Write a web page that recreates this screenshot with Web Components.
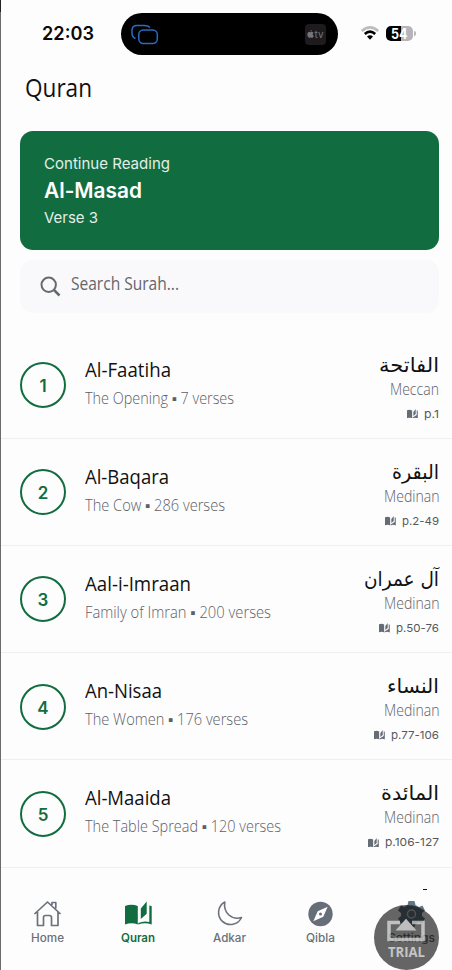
<!DOCTYPE html>
<html lang="en"><head><meta charset="utf-8"><title>Quran</title>
<style>
html,body{margin:0;padding:0}
body{background:#fdfdfd;width:452px;height:970px;overflow:hidden;font-family:"Open Sans",sans-serif}
</style></head><body>
<quran-app></quran-app>
<script>
// Text line that is condensed or expanded to a given width.
class FitText extends HTMLElement{
  connectedCallback(){
    const r=this.attachShadow({mode:'open'});
    const w=+this.getAttribute('w');
    r.innerHTML=`<style>:host{display:block;white-space:nowrap;width:${w}px}span{display:inline-block;transform-origin:0 50%}</style><span></span>`;
    const s=r.querySelector('span');
    s.textContent=this.getAttribute('text');
    const m=s.getBoundingClientRect().width;
    if(m)s.style.transform=`scaleX(${w/m})`;
  }
}
const BOOK='<path d="M0 3.2Q6.500 .8 12.600 3.400V22.300Q6.500 19.600 0 22.300ZM15.600 17.200V7.500L21.400 0V12ZM13.800 23V20.700L23.900 14.500V3.200L26.500 4.400V23Q20 19.800 13.800 23Z"/>';
const BOOK2='<path d="M0 4.500Q6.500 2 12.800 4.500V23Q6.500 20.500 0 23ZM15.800 17.500V7L21.700 0V12.200ZM24.300 4Q25.500 4 26.700 4.700V23Q20 20.300 13.300 23V21.500Q19 19 24.300 20.500Z"/>';
class StatusBar extends HTMLElement{
  connectedCallback(){
    this.attachShadow({mode:'open'}).innerHTML=`<style>
    :host{display:grid;grid-template-columns:121px 217px 1fr;height:67px;box-sizing:border-box;padding-top:13px;font-family:Inter,sans-serif}
    .time{padding-left:42px;font-size:18.500px;font-weight:600;line-height:41px;color:#0a0a0a}
    .island{height:42px;border-radius:21px;background:#000;display:flex;align-items:center;justify-content:space-between;padding:0 12px 0 10px}
    .island>svg{margin-top:2px}
    .tv{width:21px;height:21px;border-radius:4px;background:#1d1b1e;color:#77757a;display:flex;align-items:center;justify-content:center;font-size:10px}
    .right{display:flex;align-items:flex-start;padding:12px 0 0 22px}
    .bat{display:flex;justify-content:center;margin:1px 0 0 6px;width:27px;height:15px;border-radius:5px;background:linear-gradient(90deg,#000 15px,#b6b4b8 15px);color:#fff;font-weight:700;font-size:14px;line-height:15px}
    .nub{width:2px;height:5px;margin:6px 0 0 1px;border-radius:0 2px 2px 0;background:#b6b4b8}
    </style>
    <div class="time"><fit-text w="52" text="22:03"></fit-text></div>
    <div class="island"><svg width="28" height="22" viewBox="0 0 28 22" fill="none" stroke="#2a6cc0" stroke-width="1.500"><path d="M4.500 14.500C1.800 13.500 1 12 1 9V6.500C1 3 3 1.500 6 1.500H13C16.500 1.500 18 2 18.800 3.800"/><rect x="7.800" y="6" width="18.500" height="13.500" rx="4.500"/></svg>
    <div class="tv"><svg width="7" height="8" viewBox="0 0 14 16" fill="currentColor"><path d="M9.800 0C10 2 8 3.500 7 3.500 7 1.500 8 .5 9.800 0ZM7 4.500C8 4.500 9 3.500 10.500 3.800 12 4 12.800 4.800 13.200 5.500 10.500 7 11 10.500 13.700 11.500 12.500 14.500 11.200 16 9.800 15.800 8.500 15.400 8 15 7 15.200 5.500 16 4.500 16 3.500 15.200 .5 12 0 8 1.200 5.800 2.500 3.800 4.500 3.600 7 4.500Z"/></svg>tv</div></div>
    <div class="right"><svg width="20" height="16" viewBox="0 0 20 16" fill="none"><path d="M1.800 6Q10-1.200 18.200 6" stroke="#bdbbbe" stroke-width="2.700"/><path d="M4.800 8.900Q10 4.300 15.200 8.900" stroke="#000" stroke-width="2.700"/><path d="M7 11.500Q10 9 13 11.500L10 14.800Z" fill="#000"/></svg><div class="bat"><fit-text w="16.500" text="54"></fit-text></div><div class="nub"></div></div>`;
  }
}
class ContinueCard extends HTMLElement{
  connectedCallback(){
    this.attachShadow({mode:'open'}).innerHTML=`<style>
    :host{display:block;margin:0 13px 0 20px;height:119px;box-sizing:border-box;border-radius:13px;background:#116d40;padding:20px 23px 20px 23.500px;color:#fff;font-family:Inter,sans-serif}
    .a,.c{font-size:15px;line-height:25px;color:#e3efe8}.b{font-size:21px;font-weight:600;line-height:30px}.c{line-height:24px}
    </style><fit-text class="a" w="126" text="Continue Reading"></fit-text><fit-text class="b" w="98" text="Al-Masad"></fit-text><fit-text class="c" w="54" text="Verse 3"></fit-text>`;
  }
}
class SearchField extends HTMLElement{
  connectedCallback(){
    this.attachShadow({mode:'open'}).innerHTML=`<style>
    :host{display:flex;margin:10px 13px 0 20px;height:53px;border-radius:13px;background:#f9f9fc;color:#64666b;font-size:17.500px;line-height:46px}
    svg{margin:16px 10px 0 20px;flex:none}
    </style><svg width="21" height="21" viewBox="0 0 21 21" fill="none" stroke="#666a70" stroke-width="2"><circle cx="8.700" cy="8.800" r="7.200"/><path d="M14 14L19.500 19.500" stroke-width="2.500"/></svg><fit-text w="108" text="Search Surah..."></fit-text>`;
  }
}
class SurahRow extends HTMLElement{
  connectedCallback(){
    const g=n=>this.getAttribute(n);
    this.attachShadow({mode:'open'}).innerHTML=`<style>
    :host{display:flex;height:107.200px;box-sizing:border-box;border-bottom:1px solid #efeff1;padding:0 13px 0 20px}
    .num{margin-top:30.500px;width:46px;height:46px;box-sizing:border-box;border:2px solid #116d40;border-radius:50%;color:#116d40;font:600 17px/44px Inter,sans-serif;text-align:center}
    .l{margin-left:19px;padding-top:24px;flex:1}
    .n{font-size:19.500px;line-height:28px;color:#111}
    .s{margin-top:2px;font-size:15.500px;line-height:24px;color:#5c6067;font-weight:300}
    .r{display:flex;flex-direction:column;align-items:flex-end;padding-top:18px}
    .ar{font-family:"DejaVu Sans",sans-serif;font-size:20px;line-height:30px;color:#111}
    .t{font-size:15.500px;line-height:18px;color:#5c6067;font-weight:300}
    .p{display:flex;align-items:center;gap:6px;margin-top:7px;font:400 11px/18px Inter,sans-serif;color:#55595f}
    </style><div class="num">${g('no')}</div>
    <div class="l"><fit-text class="n" w="${g('nw')}" text="${g('name')}"></fit-text><fit-text class="s" w="${g('sw')}" text="${g('sub')}"></fit-text></div>
    <div class="r"><fit-text class="ar" w="${g('aw')}" text="${g('ar')}"></fit-text><fit-text class="t" w="${g('place')=='Meccan'?49:55.5}" text="${g('place')}"></fit-text>
    <div class="p"><svg width="11" height="9.500" viewBox="0 0 27 23" preserveAspectRatio="none" fill="#666c76">${BOOK}</svg><fit-text w="${g('pw')}" text="${g('page')}"></fit-text></div></div>`;
  }
}
const ICONS={
 Home:'<path d="M1.500 14L14.500 2 27.500 14M4.500 12V25.500H10.500V17.500Q10.500 15.500 12.500 15.500H16.500Q18.500 15.500 18.500 17.500V25.500H25V12M19 5V2.500H22.800V8.500" fill="none" stroke="#6c727c" stroke-width="1.700" stroke-linejoin="round"/>',
 Quran:`<g transform="translate(1 1.500)" fill="#116d40">${BOOK2}</g>`,
 Adkar:'<path d="M9.800 2A12 12 0 1 0 26.500 17.500C17 20.500 8 13 9.800 2Z" fill="none" stroke="#6c727c" stroke-width="1.600" stroke-linejoin="round"/>',
 Qibla:'<circle cx="14.500" cy="14" r="12.200" fill="#666e7a"/><path d="M21.700 6.800L17.300 16.800 7.300 21.200 11.700 11.200Z" fill="#fdfdfd"/><circle cx="14.500" cy="14" r="1.500" fill="#666e7a"/>',
 Settings:'<path d="M11.500 1H17.500L18.500 5 22 7 25.500 5.500 28 10.500 25 13V16L28 18.500 25 23.500 21.500 22 18.500 24 17.500 27H11.500L10.500 24 7.500 22 4 23.500 1 18.500 4 16V13L1 10.500 4 5.500 7.500 7 10.500 5Z" fill="#637782"/><circle cx="14.500" cy="14" r="4" fill="none" stroke="#c4ccd0" stroke-width="1.500"/>'
};
class NavItem extends HTMLElement{
  connectedCallback(){
    const l=this.getAttribute('label'),on=this.hasAttribute('active');
    this.attachShadow({mode:'open'}).innerHTML=`<style>
    :host{display:flex;flex-direction:column;align-items:center;font:${on?600:500} 11.500px/16px Inter,sans-serif;color:${on?'#116d40':'#6a7078'}}svg{margin-bottom:2px}
    </style><svg width="29" height="28" viewBox="0 0 29 28">${ICONS[l]}</svg><fit-text w="${this.getAttribute('w')}" text="${l}"></fit-text>`;
  }
}
class TrialBadge extends HTMLElement{
  connectedCallback(){
    this.attachShadow({mode:'open'}).innerHTML=`<style>
    :host{position:absolute;left:373.500px;top:904.500px;width:65px;height:65px;border-radius:50%;background:rgba(0,0,0,.6);display:flex;flex-direction:column;align-items:center;color:#c5c5c5;font:700 13.500px/16px "Open Sans",sans-serif}
    svg{margin-top:13px}
    </style><svg width="38" height="26" viewBox="0 0 38 26"><path d="M13 4.500H2V21.500H36V4.500H25" fill="none" stroke="#fff" stroke-opacity=".6" stroke-width="3.500"/><path d="M8.500 12.500L19 .8 29.500 12.500Z" fill="#bdbdbd"/></svg><fit-text w="37" text="TRIAL"></fit-text>`;
  }
}
class QuranApp extends HTMLElement{
  connectedCallback(){
    const rows=[['Al-Faatiha',86,'The Opening ▪ 7 verses',149,'الفاتحة',60,'Meccan','p.1',15],['Al-Baqara',84,'The Cow ▪ 286 verses',140,'البقرة',47,'Medinan','p.2-49',37],['Aal-i-Imraan',106,'Family of Imran ▪ 200 verses',186,'آل عمران',75,'Medinan','p.50-76',43],['An-Nisaa',77,'The Women ▪ 176 verses',163,'النساء',52,'Medinan','p.77-106',48],['Al-Maaida',86,'The Table Spread ▪ 120 verses',196,'المائدة',58,'Medinan','p.106-127',54]];
    this.attachShadow({mode:'open'}).innerHTML=`<style>
    :host{display:block;position:relative;width:452px;height:970px;box-sizing:border-box;overflow:hidden;background:linear-gradient(#222 0 12px,#6b6b6d 12px) 0 0/1px 100% no-repeat #fdfdfd}
    h1{margin:0;height:64px;padding:1px 0 0 25px;box-sizing:border-box;font-size:25.500px;line-height:38px;font-weight:400;color:#111}
    .list{padding-top:18.600px;padding-left:1px}
    surah-row{padding-left:19px}
    .peek{height:23px;padding:21px 25px 0 0;box-sizing:border-box;display:flex;justify-content:flex-end}
    .peek i{width:4px;height:1px;background:#111}
    nav{display:grid;grid-template-columns:repeat(5,91.200px);padding:9px 0 0 1.500px}
    </style><status-bar></status-bar><h1><fit-text w="67" text="Quran"></fit-text></h1><continue-card></continue-card><search-field></search-field>
    <div class="list">${rows.map((r,i)=>`<surah-row no="${i+1}" name="${r[0]}" nw="${r[1]}" sub="${r[2]}" sw="${r[3]}" ar="${r[4]}" aw="${r[5]}" place="${r[6]}" page="${r[7]}" pw="${r[8]}"></surah-row>`).join('')}</div>
    <div class="peek"><i></i></div>
    <nav><nav-item label="Home" w="33"></nav-item><nav-item label="Quran" w="34" active></nav-item><nav-item label="Adkar" w="33"></nav-item><nav-item label="Qibla" w="29"></nav-item><nav-item label="Settings" w="47"></nav-item></nav><trial-badge></trial-badge>`;
  }
}
customElements.define('fit-text',FitText);
customElements.define('status-bar',StatusBar);
customElements.define('continue-card',ContinueCard);
customElements.define('search-field',SearchField);
customElements.define('surah-row',SurahRow);
customElements.define('nav-item',NavItem);
customElements.define('trial-badge',TrialBadge);
customElements.define('quran-app',QuranApp);
</script></body></html>
